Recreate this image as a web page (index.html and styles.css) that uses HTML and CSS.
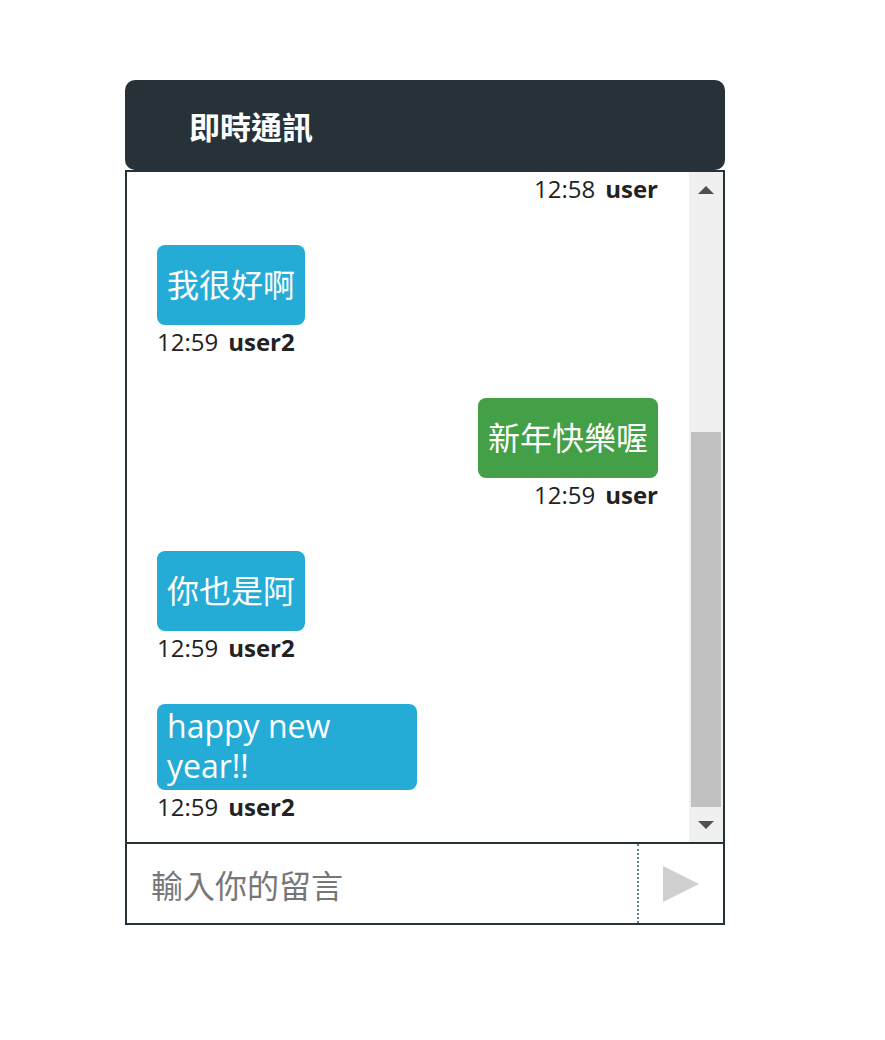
FILE: index.html
```html
<!DOCTYPE html>
<html lang="zh-Hant">
<head>
<meta charset="utf-8">
<title>即時通訊</title>
<link rel="stylesheet" href="styles.css">
</head>
<body>
<div class="chat">
  <header class="chat-header">即時通訊</header>
  <div class="chat-body">
    <div class="messages">
      <div class="msg right">
        <div class="meta"><span class="time">12:58</span><span class="name">user</span></div>
      </div>
      <div class="msg left">
        <div class="bubble blue">我很好啊</div>
        <div class="meta"><span class="time">12:59</span><span class="name">user2</span></div>
      </div>
      <div class="msg right">
        <div class="bubble green">新年快樂喔</div>
        <div class="meta"><span class="time">12:59</span><span class="name">user</span></div>
      </div>
      <div class="msg left">
        <div class="bubble blue">你也是阿</div>
        <div class="meta"><span class="time">12:59</span><span class="name">user2</span></div>
      </div>
      <div class="msg left last">
        <div class="bubble blue wrap">happy new year!!</div>
        <div class="meta"><span class="time">12:59</span><span class="name">user2</span></div>
      </div>
    </div>
    <div class="scrollbar">
      <div class="sb-btn"><span class="arrow up"></span></div>
      <div class="sb-track"><div class="sb-thumb"></div></div>
      <div class="sb-btn"><span class="arrow down"></span></div>
    </div>
  </div>
  <div class="chat-input">
    <input class="input" type="text" placeholder="輸入你的留言">
    <button class="send" type="button" aria-label="送出">
      <svg width="36" height="36" viewBox="0 0 36 36"><polygon points="0,0 36,18 0,36" fill="#d0d0d0"/></svg>
    </button>
  </div>
</div>
</body>
</html>
```

FILE: styles.css
```css
* { box-sizing: border-box; }
html, body { margin: 0; padding: 0; background: #fff; }
body {
  font-family: "Open Sans", "Noto Sans CJK TC", sans-serif;
  color: #222;
}
.chat {
  width: 600px;
  margin: 80px 0 0 125px;
  display: flex;
  flex-direction: column;
}
.chat-header {
  height: 90px;
  background: #263238;
  border-radius: 10px;
  color: #fff;
  font-size: 31px;
  font-weight: 700;
  display: flex;
  align-items: center;
  padding-left: 64px;
  font-family: "Noto Sans CJK TC", sans-serif;
}
.chat-body {
  height: 672px;
  border: 2px solid #263238;
  border-bottom: none;
  display: flex;
}
.messages {
  flex: 1;
  overflow: hidden;
  display: flex;
  flex-direction: column;
  justify-content: flex-end;
  padding: 0 31px 18px 30px;
}
.msg {
  display: flex;
  flex-direction: column;
  flex-shrink: 0;
  margin-bottom: 39px;
}
.msg.last { margin-bottom: 0; }
.msg.left { align-items: flex-start; }
.msg.right { align-items: flex-end; }
.bubble {
  color: #fff;
  font-size: 32px;
  line-height: 40px;
  padding: 20px 10px;
  border-radius: 8px;
  font-family: "Open Sans", "Noto Sans CJK TC", sans-serif;
}
.bubble.wrap {
  max-width: 260px;
  width: 260px;
  padding: 2px 10px 4px;
}
.blue { background: #25acd6; }
.green { background: #43a047; }
.meta {
  font-size: 24px;
  line-height: 34px;
  display: flex;
  gap: 10px;
  color: #222;
}
.name { font-weight: 700; }
.scrollbar {
  width: 34px;
  background: #f0f0f0;
  display: flex;
  flex-direction: column;
}
.sb-btn {
  height: 35px;
  display: flex;
  align-items: center;
  justify-content: center;
}
.sb-track {
  flex: 1;
  display: flex;
  flex-direction: column;
  justify-content: flex-end;
  padding: 0 2px;
}
.sb-thumb {
  height: 375px;
  background: #c0c0c0;
}
.arrow {
  width: 0;
  height: 0;
  border-left: 8px solid transparent;
  border-right: 8px solid transparent;
}
.arrow.up { border-bottom: 8px solid #505050; }
.arrow.down { border-top: 8px solid #505050; }
.chat-input {
  height: 83px;
  border: 2px solid #263238;
  display: flex;
}
.input {
  flex: 1;
  border: none;
  border-right: 2px dotted #607d8b;
  outline: none;
  padding: 0 0 0 24px;
  font-size: 32px;
  font-family: "Noto Sans CJK TC", sans-serif;
  color: #222;
  background: #fff;
}
.input::placeholder { color: #777; }
.send {
  width: 84px;
  border: none;
  background: #fff;
  padding: 0;
  display: flex;
  align-items: center;
  justify-content: center;
}
```
